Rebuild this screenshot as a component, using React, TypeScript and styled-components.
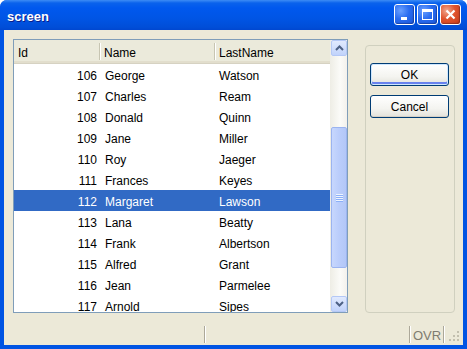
import styled, { createGlobalStyle } from "styled-components"

const GlobalStyle = createGlobalStyle`
  html, body {
    margin: 0;
    padding: 0;
    background: #ffffff;
  }
  * {
    box-sizing: border-box;
  }
`

const rows = [
  { id: 106, name: "George", last: "Watson" },
  { id: 107, name: "Charles", last: "Ream" },
  { id: 108, name: "Donald", last: "Quinn" },
  { id: 109, name: "Jane", last: "Miller" },
  { id: 110, name: "Roy", last: "Jaeger" },
  { id: 111, name: "Frances", last: "Keyes" },
  { id: 112, name: "Margaret", last: "Lawson" },
  { id: 113, name: "Lana", last: "Beatty" },
  { id: 114, name: "Frank", last: "Albertson" },
  { id: 115, name: "Alfred", last: "Grant" },
  { id: 116, name: "Jean", last: "Parmelee" },
  { id: 117, name: "Arnold", last: "Sipes" },
]

const Window = styled.div`
  width: 467px;
  height: 349px;
  display: flex;
  flex-direction: column;
  background: #0054e3;
  border-radius: 7px 7px 0 0;
  overflow: hidden;
  font-family: "Liberation Sans", Arial, sans-serif;
  font-size: 12px;
  color: #000;
`

const TitleBar = styled.div`
  height: 30px;
  flex: none;
  display: flex;
  align-items: center;
  padding: 0 6px 0 7px;
  background: linear-gradient(
    to bottom,
    #3d8cf5 0,
    #0a62ec 3px,
    #0058ee 8px,
    #0055e5 60%,
    #004ed8 90%,
    #0047d0 100%
  );

  h1 {
    flex: 1;
    margin: 0;
    font: bold 13px "Liberation Sans", Arial, sans-serif;
    color: #fff;
    text-shadow: 1px 1px 0 #0a1e8c;
    padding-top: 2px;
  }
`

const CaptionButtons = styled.div`
  display: flex;
  gap: 2px;
  margin-top: -1px;
`

const CaptionButton = styled.div<{ $close?: boolean }>`
  width: 21px;
  height: 21px;
  border: 1px solid #fff;
  border-radius: 3px;
  display: grid;
  place-content: center;
  background: ${(p) =>
    p.$close
      ? "radial-gradient(circle at 30% 30%, #f0a890 0, #e0542e 45%, #c43a17 100%)"
      : "radial-gradient(circle at 30% 30%, #6aa0ff 0, #2a6cf0 45%, #1a55d6 100%)"};
  box-shadow: inset -1px -1px 1px rgba(0, 0, 40, 0.3);
`

const Client = styled.div`
  flex: 1;
  margin: 0 4px 4px;
  background: #ece9d8;
  display: flex;
  flex-direction: column;
`

const Main = styled.div`
  display: flex;
  padding: 9px 0 0 9px;
  gap: 17px;
`

const Grid = styled.div`
  width: 335px;
  height: 274px;
  border: 1px solid #7f9db9;
  background: #fff;
  display: flex;
  overflow: hidden;
`

const ListArea = styled.div`
  width: 316px;
  display: flex;
  flex-direction: column;
`

const Header = styled.div`
  height: 24px;
  flex: none;
  display: grid;
  grid-template-columns: 86px 115px 115px;
  background: #ebeadb;
  border-bottom: 1px solid #d6d2c2;
  box-shadow: inset 0 -2px 0 #e2decd;
`

const HeaderCell = styled.div`
  display: flex;
  align-items: center;
  padding: 3px 0 0 4px;
  border-right: 1px solid #c7c5b2;
  box-shadow: 1px 0 0 #fff;
  margin: 3px 0 4px;
  &:last-child {
    border-right: none;
    box-shadow: none;
  }
`

const Row = styled.div<{ $selected?: boolean }>`
  height: 21px;
  flex: none;
  display: grid;
  grid-template-columns: 86px 115px 115px;
  align-items: center;
  padding-top: 2px;
  background: ${(p) => (p.$selected ? "#316ac5" : "transparent")};
  color: ${(p) => (p.$selected ? "#fff" : "#000")};
`

const Cell = styled.div<{ $right?: boolean }>`
  padding: ${(p) => (p.$right ? "0 3px 0 0" : "0 0 0 5px")};
  text-align: ${(p) => (p.$right ? "right" : "left")};
  white-space: nowrap;
  &:last-child {
    padding-left: 4px;
  }
`

const ScrollBar = styled.div`
  width: 17px;
  display: flex;
  flex-direction: column;
  padding: 0 0 0 1px;
  background: linear-gradient(to right, #eeede5, #fbfbf8 60%, #f3f1ec);
`

const ArrowButton = styled.div`
  height: 16px;
  flex: none;
  border: 1px solid #b4c8f6;
  border-radius: 2px;
  background: linear-gradient(to bottom, #e1eafe, #c1d3fb);
  display: grid;
  place-content: center;
`

const Track = styled.div`
  flex: 1;
  display: flex;
  flex-direction: column;
  padding: 71px 0 28px;
`

const Thumb = styled.div`
  flex: 1;
  border: 1px solid #9bb4f0;
  border-radius: 2px;
  background: linear-gradient(to right, #c7d7fd, #bacdfb 50%, #b3c7f7);
  display: grid;
  place-content: center;
`

const Grip = styled.div`
  width: 7px;
  height: 8px;
  background: repeating-linear-gradient(
    to bottom,
    #eef4fe 0,
    #eef4fe 1px,
    #8cb0f8 1px,
    #8cb0f8 2px
  );
`

const GroupBox = styled.div`
  margin-top: 6px;
  width: 90px;
  height: 268px;
  border: 1px solid #d0d0bf;
  border-radius: 4px;
  display: flex;
  flex-direction: column;
  gap: 9px;
  padding: 17px 0 0 4px;
`

const Button = styled.button<{ $default?: boolean }>`
  width: 79px;
  height: 23px;
  padding: 0;
  border: 1px solid #003c74;
  border-radius: 3px;
  font: 12px "Liberation Sans", Arial, sans-serif;
  color: #000;
  background: linear-gradient(to bottom, #ffffff, #f4f4f0 60%, #e3e2da);
  box-shadow: ${(p) =>
    p.$default
      ? "inset 0 0 0 1px #cee7ff, inset 0 -2px 0 1px #6982ee"
      : "inset 0 -1px 0 #d6d0c5"};
`

const StatusBar = styled.div`
  margin-top: auto;
  height: 22px;
  display: flex;
  align-items: stretch;
  padding: 3px 0 2px;
`

const Panel = styled.div<{ $w: number }>`
  width: ${(p) => p.$w}px;
  flex: none;
  border-right: 1px solid #aca899;
  box-shadow: 1px 0 0 #fff;
  display: flex;
  align-items: center;
  padding: 1px 0 0 3px;
  color: #7e7c70;
  font-size: 13px;
`

const SizeGrip = styled.div`
  flex: 1;
  display: flex;
  justify-content: flex-end;
  align-items: flex-end;
  padding: 0 3px 1px 0;
`

const Arrow = ({ up }: { up?: boolean }) => (
  <svg width="9" height="6" viewBox="0 0 9 6">
    <path
      d={up ? "M1 5 L4.5 1.5 L8 5" : "M1 1 L4.5 4.5 L8 1"}
      fill="none"
      stroke="#4d6185"
      strokeWidth="2"
    />
  </svg>
)

const App = () => {
  return (
    <>
      <GlobalStyle />
      <Window>
        <TitleBar>
          <h1>screen</h1>
          <CaptionButtons>
            <CaptionButton>
              <svg width="13" height="13" viewBox="0 0 13 13">
                <rect x="3" y="9" width="6" height="3" fill="#fff" />
              </svg>
            </CaptionButton>
            <CaptionButton>
              <svg width="13" height="13" viewBox="0 0 13 13">
                <rect x="1.5" y="1.5" width="10" height="10" fill="none" stroke="#fff" strokeWidth="1" />
                <rect x="1" y="1" width="11" height="3" fill="#fff" />
              </svg>
            </CaptionButton>
            <CaptionButton $close>
              <svg width="13" height="13" viewBox="0 0 13 13">
                <path d="M2.5 2.5 L10.5 10.5 M10.5 2.5 L2.5 10.5" stroke="#fff" strokeWidth="2.2" />
              </svg>
            </CaptionButton>
          </CaptionButtons>
        </TitleBar>
        <Client>
          <Main>
            <Grid>
              <ListArea>
                <Header>
                  <HeaderCell>Id</HeaderCell>
                  <HeaderCell>Name</HeaderCell>
                  <HeaderCell>LastName</HeaderCell>
                </Header>
                {rows.map((r) => (
                  <Row key={r.id} $selected={r.id === 112}>
                    <Cell $right>{r.id}</Cell>
                    <Cell>{r.name}</Cell>
                    <Cell>{r.last}</Cell>
                  </Row>
                ))}
              </ListArea>
              <ScrollBar>
                <ArrowButton>
                  <Arrow up />
                </ArrowButton>
                <Track>
                  <Thumb>
                    <Grip />
                  </Thumb>
                </Track>
                <ArrowButton>
                  <Arrow />
                </ArrowButton>
              </ScrollBar>
            </Grid>
            <GroupBox>
              <Button $default>OK</Button>
              <Button>Cancel</Button>
            </GroupBox>
          </Main>
          <StatusBar>
            <Panel $w={201} />
            <Panel $w={205} />
            <Panel $w={34}>OVR</Panel>
            <SizeGrip>
              <svg width="11" height="11" viewBox="0 0 11 11">
                {[
                  [8, 0],
                  [8, 4],
                  [4, 4],
                  [8, 8],
                  [4, 8],
                  [0, 8],
                ].map(([x, y]) => (
                  <rect key={`${x}-${y}`} x={x} y={y} width="2" height="2" fill="#c2bfae" />
                ))}
              </svg>
            </SizeGrip>
          </StatusBar>
        </Client>
      </Window>
    </>
  )
}

export default App
